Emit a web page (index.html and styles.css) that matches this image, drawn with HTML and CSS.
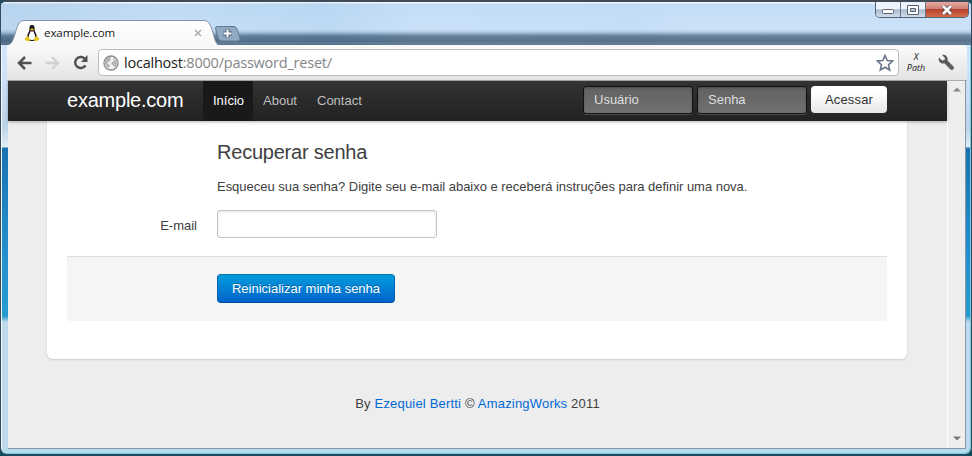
FILE: index.html
```
<!DOCTYPE html>
<html lang="pt-BR">
<head>
<meta charset="utf-8">
<title>example.com</title>
<link rel="stylesheet" href="styles.css">
</head>
<body>
<div class="window">
  <header class="titlebar">
    <div class="tab">
      <svg class="tab-shape" width="212" height="26" viewBox="0 0 212 26"><defs><linearGradient id="tabfill" x2="0" y2="1"><stop stop-color="#fff"/><stop offset="1" stop-color="#f8f8f8"/></linearGradient></defs><path d="M0 25.5C5 24 6 20 8 14C10 7 12 .5 17 .5H197C202 .5 204 6 206 13C208 19 208 23 212 25.5Z" fill="url(#tabfill)" stroke="#8291a2"/><path d="M0 25.5H212" stroke="#f9f9f9"/></svg>
      <svg class="tux" width="14" height="17" viewBox="0 0 14 17"><path d="M7 0C4.600 0 4.300 2 4.400 5C4.200 7 2 9 2 13L5 16H9L12 13C12 9 9.700 7 9.600 5C9.700 2 9.400 0 7 0Z" fill="#171717"/><path d="M5.500 6Q7 7.500 8.500 6C9 9 11 10 10 14Q7 16 4 14C3 10 5 9 5.500 6Z" fill="#fff"/><path d="M5 4L7 3.200L9 4.200L7 6Z" fill="#edb823"/><path d="M0 13L3 11L5.500 15Q5 16.500 3 16L0 15.300ZM14 13L11 11L8.500 15Q9 16.500 11 16L14 15Z" fill="#e5c51b"/></svg>
      <span class="tab-title">example.com</span>
      <svg class="close-tab" width="8" height="8" viewBox="0 0 8 8"><path d="M1 1L7 7M7 1L1 7" stroke="#a8a8a8" stroke-width="1.400"/></svg>
    </div>
    <svg class="new-tab" width="26" height="16" viewBox="0 0 26 16"><path d="M2 .5H19Q21 .5 22 3L25 12Q26 15 23 15H7Q4 15 3 12L.7 3Q0 .5 2 .5Z" fill="#8fa9c3" stroke="#62788f"/><path d="M8 7.500H17M12.500 3V12" stroke="#50647a" stroke-width="4"/><path d="M8.500 7.500H16.500M12.500 3.500V11.500" stroke="#fff" stroke-width="2"/></svg>
    <div class="window-controls">
      <span class="control minimize"><svg width="12" height="5" viewBox="0 0 12 5"><rect x=".5" y=".5" width="11" height="4" rx="1" fill="#fff" stroke="#596071"/></svg></span>
      <span class="control maximize"><svg width="12" height="10" viewBox="0 0 12 10"><path d="M.5 .5H11.500V9.500H.5ZM3.500 3.500H8.500V6.500H3.500Z" fill="#fff" fill-rule="evenodd" stroke="#596071"/></svg></span>
      <span class="control close"><svg width="12" height="10" viewBox="0 0 12 10"><path d="M2 1L10 9M10 1L2 9" stroke="#54454d" stroke-width="4.200"/><path d="M2 1L10 9M10 1L2 9" stroke="#fff" stroke-width="2.600"/></svg></span>
    </div>
  </header>
  <nav class="toolbar">
    <svg class="back" width="15" height="14" viewBox="0 0 15 14"><path d="M14.500 7H2M8 1L2 7L8 13" fill="none" stroke="#505050" stroke-width="2.500"/></svg>
    <svg class="forward" width="15" height="14" viewBox="0 0 15 14"><path d="M.5 7H13M7 1L13 7L7 13" fill="none" stroke="#d0d0d0" stroke-width="2.300"/></svg>
    <svg class="reload" width="16" height="15" viewBox="0 0 16 15"><path d="M12.500 10.300A5.500 5.500 0 1 1 11.500 3.500" fill="none" stroke="#505050" stroke-width="2.400"/><path d="M14.500 0V7H8Z" fill="#505050"/></svg>
    <div class="address">
      <svg class="globe" width="16" height="16" viewBox="0 0 16 16"><circle cx="8" cy="8" r="7" fill="#f2f2f2" stroke="#8b8b8b" stroke-width="1.300"/><path d="M2 5L5 2L8 2L7 4L8 5L6 7H4L5 9L7 10L6 13L4 12L3 10L1.500 8ZM10 2L12 4L14 7L13 11L11 12L10 10L8 9L9 7L11 6Z" fill="#b2b2b2"/></svg>
      <span class="url"><span class="host">localhost</span>:8000/password_reset/</span>
      <svg class="star" width="18" height="18" viewBox="0 0 18 18"><path d="M9 1.500L11.200 6.500L16.600 7L12.500 10.700L13.700 16L9 13.200L4.300 16L5.500 10.700L1.400 7L6.800 6.500Z" fill="#fff" stroke="#68748a" stroke-width="1.600"/></svg>
    </div>
    <div class="xpath"><span>X</span><span>Path</span></div>
    <svg class="wrench" width="17" height="17" viewBox="0 0 17 17"><path d="M4 1L7 4L6.500 6L4 6.500L1 3.500C-.3 7 2.800 10.500 6.300 9.300L12.500 15.500C14.500 17 17 14.500 15.500 12.500L9.500 6.500C10.500 3 7.500 0 4 1Z" fill="#5b5b5b"/></svg>
  </nav>
  <div class="viewport">
    <main class="page">
      <div class="navbar">
        <a class="brand">example.com</a>
        <a class="nav-link active">Início</a>
        <a class="nav-link about">About</a>
        <a class="nav-link contact">Contact</a>
        <form class="login">
          <div class="login-field">Usuário</div>
          <div class="login-field">Senha</div>
          <button type="button" class="login-button">Acessar</button>
        </form>
      </div>
      <section class="content">
        <h3>Recuperar senha</h3>
        <p class="help">Esqueceu sua senha? Digite seu e-mail abaixo e receberá instruções para definir uma nova.</p>
        <div class="form-row"><label for="email">E-mail</label><input id="email" type="text"></div>
        <div class="actions"><button type="button" class="primary">Reinicializar minha senha</button></div>
      </section>
      <footer><span class="credit">By <a>Ezequiel Bertti</a> © <a>AmazingWorks</a> 2011</span></footer>
    </main>
    <aside class="scrollbar"><svg width="8" height="5" viewBox="0 0 8 5"><path d="M0 4.500L4 .5L8 4.500Z" fill="#858585"/></svg><svg width="8" height="5" viewBox="0 0 8 5"><path d="M0 .5L4 4.500L8 .5Z" fill="#777"/></svg></aside>
  </div>
</div>
</body>
</html>
```
FILE: styles.css
```
* { box-sizing: border-box; }
body { margin: 0; width: 972px; height: 456px; overflow: hidden; background: #124e60; font: 13px/18px "Liberation Sans", sans-serif; color: #404040; }
svg { display: block; flex: none; }
.window { height: 455px; padding: 0 5px 5px 7px; border: 1px solid #34495b; border-top: 2px solid #424b58; border-radius: 6px 6px 7px 7px; overflow: hidden; display: flex; flex-direction: column; background: linear-gradient(#d0e4fa 0 65px, #bcd4e9 125px, #e1edf5 145px, #1973b2 146px, #248fce 250px, #269bd0 314px, #bfd9ed 320px 445px, #b5dced 447px); box-shadow: inset 1px 1px #f4faff, inset -1px -1px #70cbe0; }
.titlebar { height: 43px; flex: none; display: flex; align-items: flex-start; margin: 0 -5px 0 -7px; padding: 18px 2px 0 6px; background: linear-gradient(68deg, #8fb1d133 0, #c0dcf533 18%, #9dc3e533 34%, #d6e9ff33 43%, #c4dcf633 65%, #d9e9fa33 70%), linear-gradient(#f8fcff 0 1px, #bfdaf5 2px, #c8e0f8 27px, #a9c4dd 30px, #4c6984 34px, #395470 39px, #526d87 42px, #35485b 43px); }
.tab { position: relative; width: 212px; height: 26px; display: flex; align-items: center; padding: 0 17px 0 18px; }
.tab-shape { position: absolute; left: 0; top: 0; }
.tux, .tab-title, .close-tab { position: relative; }
.tab-title { margin-left: 5px; font: 11.5px/16px "Open Sans", sans-serif; letter-spacing: -.08px; color: #161616; }
.close-tab { margin-left: auto; }
.new-tab { margin: 6px 0 0 -4px; }
.window-controls { display: flex; margin: -18px 0 0 auto; height: 16px; border: 1px solid #50617a; border-top: 0; border-radius: 0 0 5px 5px; overflow: hidden; }
.control { display: flex; align-items: center; justify-content: center; width: 25px; border-right: 1px solid #66778d; background: linear-gradient(#edf4fb 0 45%, #a9bbcf 52%, #d3dfeb); }
.minimize { padding-top: 4px; }
.maximize { width: 25px; }
.close { width: 42px; border: 0; background: linear-gradient(#e6aaa2 0, #ce8074 45%, #b7402e 50%, #d46c49); }
.toolbar { height: 36px; flex: none; display: flex; align-items: center; padding: 0 8px 0 10px; margin: 0 -1px; border-bottom: 1px solid #aaa; background: linear-gradient(#fafafa, #e4e4e4); border-radius: 3px 3px 0 0; }
.forward { margin-left: 13px; }
.reload { margin-left: 13px; }
.address { width: 801px; height: 27px; margin-left: 9px; display: flex; align-items: center; padding: 0 4px 0 4px; background: #fff; border: 1px solid #bdbdbd; border-radius: 4px; }
.url { margin-left: 5px; color: #858585; font: 14.5px/24px "Open Sans", sans-serif; letter-spacing: -.22px; white-space: nowrap; }
.host { color: #202020; }
.star { margin-left: auto; }
.xpath { width: 22px; margin-left: 6px; text-align: center; display: flex; flex-direction: column; color: #171717; font: italic 9px/10px "Open Sans", sans-serif; gap: 1px; }
.wrench { margin-left: 11px; }
.viewport { flex: 1; display: flex; border-right: 1px solid #8598ab; border-bottom: 1px solid #8598ad; min-height: 0; }
.page { flex: 1; background: #ededed; display: flex; flex-direction: column; }
.navbar { height: 40px; flex: none; display: flex; padding-left: 59px; padding-right: 60px; background: linear-gradient(#333, #222); box-shadow: 0 1px 3px rgba(0,0,0,.3); position: relative; }
.brand { width: 136px; color: #fff; font-size: 20px; line-height: 38px; letter-spacing: -.23px; }
.nav-link { color: #bfbfbf; line-height: 39px; padding-left: 10px; }
.active { width: 50px; background: #191919; color: #fff; }
.about { width: 54px; }
.contact { width: 66px; }
.login { margin: 5px 0 0 auto; display: flex; align-items: flex-start; }
.login-field { width: 110px; height: 28px; margin-right: 4px; padding-left: 10px; line-height: 26px; border: 1px solid #111; border-radius: 3px; background: linear-gradient(#616161, #707070); color: #dedede; box-shadow: inset 0 1px 2px #0003, 0 1px #ffffff30; }
.login-button { width: 76px; height: 27px; padding: 0; border: 0; border-radius: 4px; color: #333; background: linear-gradient(#fff 25%, #e6e6e6); font: inherit; letter-spacing: .15px; }
.content { width: 860px; height: 238px; margin-left: 39px; padding: 18px 20px 0; background: #fff; border-radius: 0 0 6px 6px; box-shadow: 0 1px 2px rgba(0,0,0,.15); }
h3 { margin: 0 0 0 150px; font-size: 20px; line-height: 26px; font-weight: normal; letter-spacing: -.22px; }
.help { margin: 13px 0 0 150px; width: max-content; line-height: 18px; letter-spacing: -.025px; }
.form-row { display: flex; align-items: flex-start; height: 28px; margin-top: 14px; }
label { width: 130px; text-align: right; line-height: 31px; }
input { width: 220px; height: 28px; margin-left: 20px; border: 1px solid #c4c4c4; border-radius: 3px; box-shadow: inset 0 1px 3px rgba(0,0,0,.1); }
.actions { height: 65px; margin-top: 18px; padding: 17px 0 0 150px; border-top: 1px solid #ddd; border-radius: 0 0 3px 3px; background: #f5f5f5; }
.primary { width: 178px; height: 29px; padding: 0; border: 1px solid #0064ad; border-color: #0077b5 #0062b6 #004b9a; border-radius: 4px; color: #fff; background: linear-gradient(#049cdb, #0064cd); font: inherit; text-shadow: 0 -1px rgba(0,0,0,.25); }
footer { padding-top: 36px; text-align: center; letter-spacing: .19px; }
footer a { color: #0069d6; }
.scrollbar { width: 18px; border-left: 1px solid #fff; background: #eee; display: flex; flex-direction: column; align-items: center; justify-content: space-between; padding: 6px 0 7px; }
```
